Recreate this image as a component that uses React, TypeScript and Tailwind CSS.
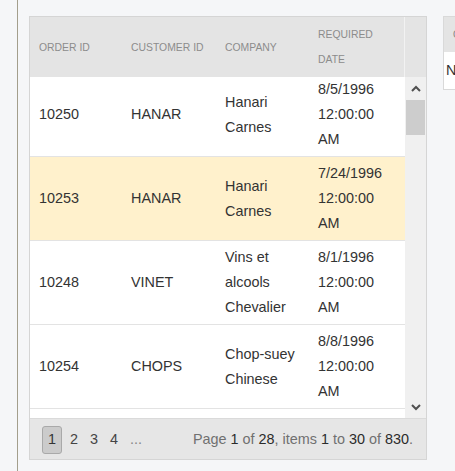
import React from 'react'

interface Order {
  id: string
  customer: string
  company: string
  date: string
  selected?: boolean
}

const orders: Order[] = [
  { id: '10250', customer: 'HANAR', company: 'Hanari Carnes', date: '8/5/1996 12:00:00 AM' },
  { id: '10253', customer: 'HANAR', company: 'Hanari Carnes', date: '7/24/1996 12:00:00 AM', selected: true },
  { id: '10248', customer: 'VINET', company: 'Vins et alcools Chevalier', date: '8/1/1996 12:00:00 AM' },
  { id: '10254', customer: 'CHOPS', company: 'Chop-suey Chinese', date: '8/8/1996 12:00:00 AM' },
]

const colWidths = ['w-[92px]', 'w-[94px]', 'w-[93px]', 'w-[95px]']

function Chevron({ up }: { up?: boolean }) {
  return (
    <svg width="10" height="7" viewBox="0 0 10 7" className="block">
      <polyline
        points={up ? '1,6 5,2 9,6' : '1,1 5,5 9,1'}
        fill="none"
        stroke="#505050"
        strokeWidth="2"
      />
    </svg>
  )
}

export default function App() {
  return (
    <div
      className="flex h-[471px] w-[455px] overflow-hidden bg-[#f5f6f8]"
      style={{ fontFamily: '"Liberation Sans", Arial, sans-serif' }}
    >
      <div className="w-[18px] shrink-0 border-r border-[#a39e8c]" />

      {/* grid */}
      <div className="ml-[11px] mt-4 flex h-[444px] w-[398px] shrink-0 flex-col border border-[#d5d5d5] bg-white">
        <div className="flex h-[60px] shrink-0 bg-[#e4e4e4]">
          {['Order ID', 'Customer ID', 'Company', 'Required Date'].map((h, i) => (
            <div
              key={h}
              className={`${colWidths[i]} flex items-center pl-[9px] pr-[9px] text-[10.4px] uppercase leading-[25px] text-[#8c8c8c]`}
            >
              {h}
            </div>
          ))}
          <div className="w-px bg-[#f2f2f2]" />
          <div className="flex-1" />
        </div>

        <div className="flex h-[341px] shrink-0">
          <div className="w-[375px] overflow-hidden">
            <div className="-mt-1">
              {orders.map((o) => (
                <div
                  key={o.id}
                  className={`flex border-b border-[#e3e3e3] text-[14.4px] leading-[25px] text-[#333] ${
                    o.selected ? 'bg-[#fff1cc]' : 'bg-white'
                  }`}
                >
                  {[o.id, o.customer, o.company, o.date].map((v, i) => (
                    <div
                      key={i}
                      className={`${colWidths[i]} flex min-h-[83px] items-center py-1 pl-[9px] pr-[10px]`}
                    >
                      {v}
                    </div>
                  ))}
                </div>
              ))}
              {/* next row, only its top shows */}
              <div className="h-[83px] bg-white" />
            </div>
          </div>
          <div className="flex w-[21px] flex-col bg-[#f0f0f0]">
            <div className="flex h-[22px] items-center justify-center">
              <Chevron up />
            </div>
            <div className="mx-px mt-px h-[35px] bg-[#cdcdcd]" />
            <div className="flex-1" />
            <div className="flex h-[22px] items-center justify-center">
              <Chevron />
            </div>
          </div>
        </div>

        <div className="flex flex-1 items-center border-t border-[#dadada] bg-[#e6e6e6] pl-3 pr-[13px] pt-[2px] text-[14.4px]">
          <div className="flex h-7 w-5 items-center justify-center rounded-[3px] border border-[#a9a9a9] bg-[#cbcbcb] text-[#333]">
            1
          </div>
          <div className="ml-[2px] w-5 text-center text-[#444]">2</div>
          <div className="w-5 text-center text-[#444]">3</div>
          <div className="w-5 text-center text-[#444]">4</div>
          <div className="ml-[2px] w-5 text-center text-[#888]">...</div>
          <div className="ml-auto whitespace-nowrap text-[#707070]">
            Page <span className="text-[#2b2b2b]">1</span> of <span className="text-[#2b2b2b]">28</span>, items{' '}
            <span className="text-[#2b2b2b]">1</span> to <span className="text-[#2b2b2b]">30</span> of{' '}
            <span className="text-[#2b2b2b]">830</span>.
          </div>
        </div>
      </div>

      {/* second grid, clipped */}
      <div className="ml-4 mt-4 flex h-[74px] w-[200px] shrink-0 flex-col border border-[#d9d9d9] bg-white">
        <div className="flex h-[35px] shrink-0 items-center bg-[#e4e4e4] pl-[9px] text-[10.4px] uppercase text-[#8c8c8c]">
          Order ID
        </div>
        <div className="flex flex-1 items-center pl-[2px] text-[14.4px] text-[#333]">No records available.</div>
      </div>
    </div>
  )
}
